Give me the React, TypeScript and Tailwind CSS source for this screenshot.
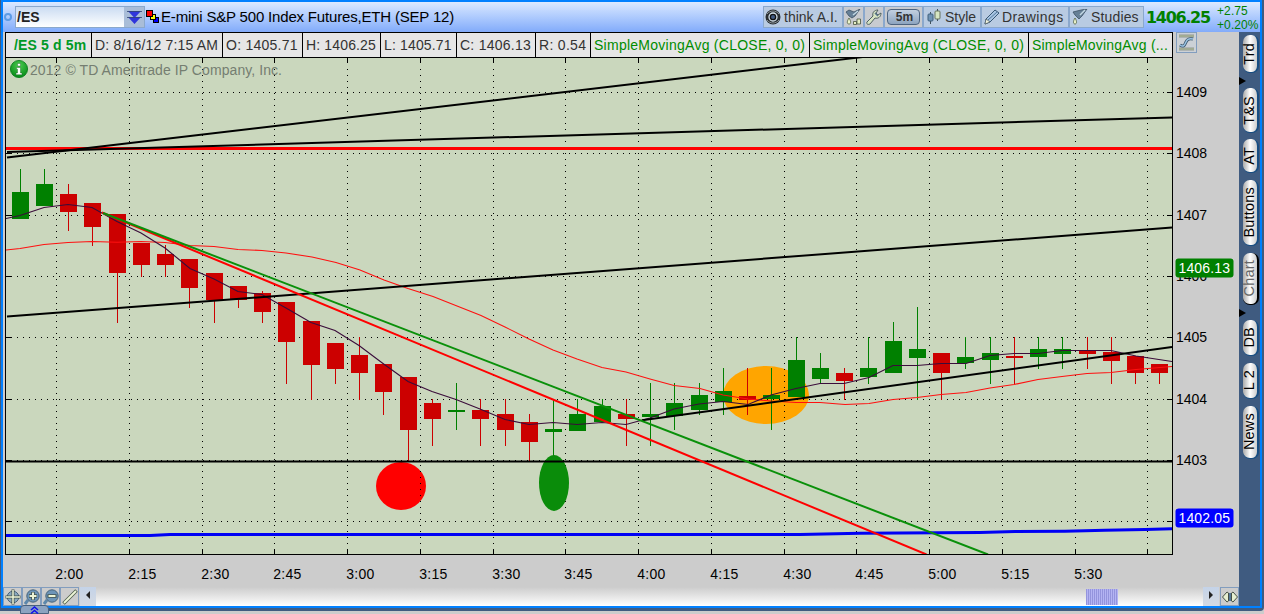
import type { ReactNode } from "react";

type Candle = [x: number, high: number, top: number, bottom: number, low: number, up: boolean];

const candles: Candle[] = [
  [12, 169, 192, 219, 219, true],
  [36, 169, 184, 206, 206, true],
  [60, 184, 194, 212, 231, false],
  [84, 203, 203, 227, 246, false],
  [109, 214, 214, 273, 323, false],
  [133, 243, 243, 265, 277, false],
  [157, 245, 254, 265, 277, false],
  [181, 259, 259, 288, 308, false],
  [206, 273, 273, 300, 323, false],
  [230, 286, 286, 300, 308, false],
  [254, 291, 293, 312, 323, false],
  [278, 302, 302, 342, 384, false],
  [303, 321, 321, 365, 400, false],
  [327, 343, 343, 369, 384, false],
  [351, 337, 355, 373, 400, false],
  [375, 364, 364, 392, 415, false],
  [400, 377, 377, 430, 461, false],
  [424, 399, 403, 419, 446, false],
  [448, 383, 410, 412, 430, true],
  [472, 399, 410, 419, 446, false],
  [497, 399, 414, 430, 446, false],
  [521, 414, 422, 442, 461, false],
  [545, 399, 429, 432, 461, true],
  [569, 399, 414, 431, 431, true],
  [594, 399, 406, 422, 422, true],
  [618, 399, 414, 419, 446, false],
  [642, 383, 414, 417, 446, true],
  [666, 383, 403, 416, 430, true],
  [691, 383, 395, 410, 415, true],
  [715, 368, 391, 402, 415, true],
  [739, 368, 396, 400, 415, false],
  [763, 368, 395, 399, 430, true],
  [788, 337, 360, 397, 397, true],
  [812, 353, 368, 379, 383, true],
  [836, 368, 373, 381, 400, false],
  [860, 337, 368, 377, 384, true],
  [885, 322, 341, 373, 373, true],
  [909, 307, 349, 358, 400, true],
  [933, 353, 353, 373, 400, false],
  [957, 337, 357, 363, 369, true],
  [982, 337, 353, 360, 384, true],
  [1006, 337, 356, 358, 384, false],
  [1030, 337, 349, 357, 369, true],
  [1054, 337, 349, 354, 369, true],
  [1079, 337, 351, 354, 369, false],
  [1103, 337, 352, 361, 384, false],
  [1127, 356, 356, 373, 384, false],
  [1151, 364, 364, 373, 384, false],
];

const slowAvg =
  "6,250 20,248.5 44,244.5 68,242.5 92,241.5 117,242.3 141,241.5 165,242.5 190,245.5 214,246.5 238,249.5 262,250.5 286,253 312,257 336,262.5 360,270 384,280 408,288.5 433,296.5 457,306 481,315.5 505,327 529,339 553,350 577,359 602,367.5 626,372 650,379 674,385.5 700,388.5 723,395 748,399 771,401 796,402.5 820,402.5 845,404.5 869,403.5 893,399.5 917,397.5 941,394.5 966,392.5 990,388 1014,384.5 1038,379.5 1062,376.5 1087,373.5 1111,372.5 1136,369.5 1172,366.5";

const fastAvg =
  "6,218.5 20,215.5 44,207.5 68,204.5 92,207.5 117,221.5 141,233 165,248 190,268.5 214,279 238,291.5 262,294.5 286,308 311,322.5 335,330.5 359,345.5 383,363.5 408,381.5 432,391.5 456,399.5 480,409 505,419.5 529,424.5 553,422.5 577,424.5 602,422.5 626,424.5 650,418 674,409 699,404 723,401.5 748,404.5 771,395 796,388.5 820,383.5 844,383.5 869,377.5 893,365.5 917,365.5 941,363.5 966,363.5 990,355.5 1014,353.5 1038,353.5 1062,350.5 1111,350.5 1136,356 1172,361.5";

const times = [
  { x: 56, label: "2:00" },
  { x: 129, label: "2:15" },
  { x: 202, label: "2:30" },
  { x: 274, label: "2:45" },
  { x: 347, label: "3:00" },
  { x: 420, label: "3:15" },
  { x: 493, label: "3:30" },
  { x: 565, label: "3:45" },
  { x: 638, label: "4:00" },
  { x: 711, label: "4:15" },
  { x: 784, label: "4:30" },
  { x: 856, label: "4:45" },
  { x: 929, label: "5:00" },
  { x: 1002, label: "5:15" },
  { x: 1075, label: "5:30" },
  { x: 1147, label: "" },
];

const prices = [
  { y: 92, label: "1409" },
  { y: 153, label: "1408" },
  { y: 215, label: "1407" },
  { y: 276, label: "1406" },
  { y: 337, label: "1405" },
  { y: 399, label: "1404" },
  { y: 460, label: "1403" },
  { y: 521, label: "" },
];

function PriceTag({ y, fill, label }: { y: number; fill: string; label: string }) {
  return (
    <g>
      <rect x="1175.5" y={y} width="58" height="19" rx="3" fill={fill} />
      <text x="1178.5" y={y + 14} fill="#fff" textLength="51.5">{label}</text>
    </g>
  );
}

function Chart() {
  return (
    <svg className="block h-[529px] w-[1234px]" viewBox="5 58 1234 529" fontFamily="'Liberation Sans', Arial, sans-serif" fontSize="14">
      <defs>
        <clipPath id="plot">
          <rect x="6" y="58" width="1166" height="496" />
        </clipPath>
        <radialGradient id="info" cx="0.5" cy="0.3" r="0.7">
          <stop offset="0" stopColor="#4ccc50" />
          <stop offset="1" stopColor="#058a18" />
        </radialGradient>
      </defs>
      <rect x="5" y="58" width="1168" height="497" fill="#cad7bd" />

      <g clipPath="url(#plot)">
        <ellipse cx="766" cy="395" rx="43" ry="29" fill="#ffa500" />
        <ellipse cx="401" cy="486" rx="25" ry="24" fill="#ff0000" />

        {/* Grid */}
        <g stroke="#000" shapeRendering="crispEdges">
          {times.map(({ x }) => (
            <g key={x}>
              <path d={`M${x + 0.5} 58v5M${x + 0.5} 549v5`} />
              <path d={`M${x + 0.5} 69V549`} strokeDasharray="1 5" />
            </g>
          ))}
          {prices.map(({ y }) => (
            <g key={y}>
              <path d={`M6 ${y + 0.5}h6M1167 ${y + 0.5}h5`} />
              <path d={`M17 ${y + 0.5}H1166`} strokeDasharray="1 5" />
            </g>
          ))}
        </g>

        {/* Candles */}
        <g shapeRendering="crispEdges">
          {candles.map(([x, high, top, bottom, low, up]) => (
            <g key={x} fill={up ? "#008000" : "#cc0000"}>
              <rect x={x + 8} y={high} width="1" height={low - high} />
              <rect x={x} y={top} width="17" height={bottom - top} />
            </g>
          ))}
        </g>

        <polyline points={slowAvg} fill="none" stroke="#ff1010" strokeWidth="1.1" />
        <polyline points={fastAvg} fill="none" stroke="#3a0c3a" strokeWidth="1.1" />
        <polyline
          points="6,535.5 150,535.5 170,534.5 800,534.5 860,533.3 980,532.5 1015,531.5 1065,531.3 1105,530.3 1145,529.5 1172,528.8"
          fill="none"
          stroke="#0000f5"
          strokeWidth="3"
        />

        {/* Drawings */}
        <ellipse cx="554" cy="483" rx="15" ry="28" fill="#0a8c0a" />
        <rect x="6" y="147" width="1166" height="3" fill="#ff0000" />
        <g stroke="#000" strokeWidth="2" fill="none">
          <path d="M7 157.5L867 56.5" />
          <path d="M7 152L1172 117.5" />
          <path d="M7 316.5L1172 227.5" />
          <path d="M642 420.3L1172 347" />
          <path d="M6 461.5H1172" />
        </g>
        <path d="M102 212.5L926.5 554.5" stroke="#ff0000" strokeWidth="2" />
        <path d="M103 213L988 554.5" stroke="#0a900a" strokeWidth="2" />
      </g>

      <path d="M5.5 58V554.5H1172.5V58" fill="none" stroke="#000" shapeRendering="crispEdges" />

      <circle cx="19" cy="69" r="8.6" fill="url(#info)" stroke="#047a18" strokeWidth="0.8" />
      <path d="M17.5 63.5h3v2.5h-3zM16.5 67.5h4v5.5h1.5v1.7h-6V73h1.5v-3.8h-1z" fill="#fff" stroke="#155a20" strokeWidth="0.4" />
      <text x="30" y="75" fill="#757e71" textLength="252">2012 © TD Ameritrade IP Company, Inc.</text>

      {times.map(({ x, label }) => (
        <text key={x} x={x - 0.7} y="579" textLength={label ? 28 : undefined}>{label}</text>
      ))}
      {prices.map(({ y, label }) => (
        <text key={y} x="1176" y={y + 5} textLength={label ? 31 : undefined}>{label}</text>
      ))}
      <PriceTag y={258.5} fill="#008000" label="1406.13" />
      <PriceTag y={508.5} fill="#0000ff" label="1402.05" />
    </svg>
  );
}

function ToolButton({ className, children }: { className: string; children: ReactNode }) {
  return (
    <button className={`flex h-[22px] shrink-0 items-center border border-[#8ba8cc] ${className}`}>{children}</button>
  );
}

function FlaskIcon() {
  return (
    <svg className="h-4 w-4 shrink-0" viewBox="0 0 16 16">
      <path d="M1 3L9 1L15 0L10 7L7 10L3 6Z" fill="#668097" stroke="#3d5264" strokeWidth="0.8" />
      <path d="M8 6L13 1" stroke="#c3d8e4" strokeWidth="1.5" />
      <path d="M3 9C1 12 1 15 3 15S5 12 3 9Z" fill="#edf5cc" stroke="#526041" strokeWidth="0.8" />
    </svg>
  );
}

function Toolbar() {
  return (
    <div className="flex">
      <ToolButton className="w-[80px] gap-[3px] bg-[#b9cbe2] pl-px">
        <svg className="h-4 w-4 shrink-0" viewBox="0 0 16 16">
          <circle cx="8" cy="8" r="7.5" fill="#292e32" />
          <path d="M2 5C5 1 11 1 14 5M2 11C5 15 11 15 14 11" fill="none" stroke="#8b9499" />
          <circle cx="8" cy="8" r="4" fill="#111" stroke="#d7e4ed" strokeWidth="1.3" />
          <circle cx="8" cy="8" r="2" fill="#405a82" />
        </svg>
        <span className="whitespace-nowrap">think A.I.</span>
      </ToolButton>
      <ToolButton className="w-[21px] justify-center bg-[#c8cbd0]">
        <svg className="h-[17px] w-[17px] shrink-0" viewBox="0 0 17 17">
          <path d="M1 3L4 1L9 3L15 0L10 7L7 9L4 7Z" fill="#668097" stroke="#3d5264" strokeWidth="0.8" />
          <path d="M8 6L13 2" stroke="#c3d8e4" strokeWidth="1.5" />
          <path d="M4 9C2 12 1.5 15 4 15S6 12 4 9Z" fill="#edf5cc" stroke="#526041" strokeWidth="0.8" />
          <path d="M8.5 12.500h3v3h-3zM12 10h3.500v5H12z" fill="#e5eec5" stroke="#47533d" strokeWidth="0.8" />
        </svg>
      </ToolButton>
      <ToolButton className="w-[20px] justify-center bg-[#c8cbd0]">
        <svg className="h-4 w-4 shrink-0" viewBox="0 0 16 16">
          <path d="M1 13L7 7C6 4 8 1 12 1L10 4L12 6L15 4C15 8 12 10 9 9L4 15C2 16 0 15 1 13Z" fill="#d7e4c4" stroke="#4f6060" />
          <path d="M9 4L12 7" stroke="#58768b" strokeWidth="1.5" />
        </svg>
      </ToolButton>
      <ToolButton className="w-[39px] justify-center bg-[#c8cbd0]">
        <span className="flex h-4 w-[33px] items-center justify-center rounded border border-[#4d6480] bg-linear-to-b from-[#c2d0e0] to-[#8da4bf] pl-[2px] text-xs font-bold">5m</span>
      </ToolButton>
      <ToolButton className="w-[58px] gap-1 bg-[#b9cbe2] pl-[3px]">
        <svg className="h-4 w-[14px] shrink-0" viewBox="0 0 14 16">
          <path d="M3.5 3v12M10.5 0v12" stroke="#41515b" />
          <rect x="1" y="5" width="5" height="7" rx="1" fill="#6f93b5" stroke="#41617c" />
          <rect x="8" y="2" width="5" height="8" rx="1" fill="#d7e6c2" stroke="#66735d" />
        </svg>
        <span>Style</span>
      </ToolButton>
      <ToolButton className="w-[88px] gap-[2px] bg-[#b9cbe2] pl-[2px]">
        <svg className="h-4 w-4 shrink-0" viewBox="0 0 16 16">
          <path d="M1 15L2 10L11 1L15 4L6 13Z" fill="#a9c5e2" stroke="#365675" />
          <path d="M4 11L13 3" stroke="#5378a0" />
          <path d="M1 15L2 10L6 13Z" fill="#f3f5df" stroke="#4c5960" strokeWidth="0.7" />
        </svg>
        <span className="tracking-[0.4px]">Drawings</span>
      </ToolButton>
      <ToolButton className="w-[75px] gap-[3px] bg-[#b9cbe2] pl-[2px]">
        <FlaskIcon />
        <span className="tracking-[0.15px]">Studies</span>
      </ToolButton>
    </div>
  );
}

function Header() {
  return (
    <header className="flex h-[30px] items-center bg-linear-to-b from-[#dbe9ff] to-[#82abfa]">
      <div className="ml-px h-2 w-2 shrink-0 rounded-full border-2 border-[#5c9be5]" />
      <div className="ml-[3px] flex h-[22px] w-[130px] shrink-0 items-center border border-[#8ba8cc] bg-linear-to-b from-[#cbdcf2] to-white">
        <span className="flex-1 pl-px text-[14px] font-bold text-[#222]">/ES</span>
        <div className="flex h-full w-[20px] items-center justify-center bg-[#a9bdd8]">
          <svg className="h-[15px] w-[15px]" viewBox="0 0 15 15">
            <path d="M1 1H14L7.5 8ZM1 7H14L7.5 14Z" fill="#2f35db" />
            <path d="M0 1.500H15M0 7.500H15" stroke="#31456e" strokeWidth="0.8" />
          </svg>
        </div>
      </div>
      <svg className="ml-px h-[14px] w-[14px] shrink-0" viewBox="0 0 14 14" shapeRendering="crispEdges">
        <path d="M7.500 7.500h5v5h-5z" fill="#0000ff" stroke="#000" />
        <path d="M4.500 4.500h5v5h-5z" fill="#ffff00" stroke="#000" />
        <path d="M0.500 0.500h6v6h-6z" fill="#ff0000" stroke="#000" />
      </svg>
      <span className="ml-px w-[602px] shrink-0 whitespace-nowrap text-[15px] tracking-[-0.18px] text-black">E-mini S&amp;P 500 Index Futures,ETH (SEP 12)</span>
      <Toolbar />
      <span className="ml-[2px] w-[71px] shrink-0 whitespace-nowrap pt-px font-['DejaVu_Sans',sans-serif] text-[16px] font-bold tracking-[-1.3px] text-[#008000]">1406.25</span>
      <div className="pt-[2px] whitespace-nowrap text-[12px] leading-[14px] tracking-[0.1px] text-[#008000]">
        <div>+2.75</div>
        <div>+0.20%</div>
      </div>
    </header>
  );
}

const cells = [
  { text: "D: 8/16/12 7:15 AM", width: "w-[131px]", color: "text-[#333] tracking-[0.18px]" },
  { text: "O: 1405.71", width: "w-[80px]", color: "text-[#333] tracking-[0.25px]" },
  { text: "H: 1406.25", width: "w-[78px]", color: "text-[#333] tracking-[0.15px]" },
  { text: "L: 1405.71", width: "w-[76px]", color: "text-[#333] tracking-[0.15px]" },
  { text: "C: 1406.13", width: "w-[79px]", color: "text-[#333] tracking-[0.25px]" },
  { text: "R: 0.54", width: "w-[55px]", color: "text-[#333] tracking-[0.3px]" },
  { text: "SimpleMovingAvg (CLOSE, 0, 0)", width: "w-[219px]", color: "text-[#008c00] tracking-[0.26px]" },
  { text: "SimpleMovingAvg (CLOSE, 0, 0)", width: "w-[219px]", color: "text-[#008c00] tracking-[0.26px]" },
  { text: "SimpleMovingAvg (...", width: "w-[144px]", color: "text-[#008c00] tracking-[0.2px]" },
];

function InfoBar() {
  return (
    <div className="flex h-[26px] w-[1168px] border-y border-l border-black bg-[#e6e6e6] leading-6">
      <div className="w-[86px] border-r border-black pl-[8px] text-[14px] font-bold tracking-[0.15px] whitespace-nowrap text-[#009926]">/ES 5 d 5m</div>
      {cells.map((cell, i) => (
        <div key={i} className={`shrink-0 overflow-hidden border-r border-black pl-[3px] whitespace-nowrap ${cell.width} ${cell.color}`}>
          {cell.text}
        </div>
      ))}
    </div>
  );
}

function SideTab({ label, className }: { label: string; className: string }) {
  return (
    <button className={`flex w-4 shrink-0 items-center justify-center rounded-[7px] border-r-2 border-b border-[#174d82] bg-linear-to-r from-[#aaa] via-white to-[#ccc] ${className}`}>
      <span className="rotate-180 text-[14.5px] tracking-[0.2px] whitespace-nowrap [writing-mode:vertical-rl]">{label}</span>
    </button>
  );
}

function Triangle({ className }: { className: string }) {
  return (
    <svg className={`block h-2 w-[7px] shrink-0 self-start ${className}`} viewBox="0 0 7 8">
      <path d="M0 0L7 4L0 8Z" />
    </svg>
  );
}

function Sidebar() {
  return (
    <aside className="flex w-[21px] flex-col items-center bg-[#3f5b80] pt-[3px] pl-[2px] text-black">
      <SideTab label="Trd" className="h-[38px]" />
      <Triangle className="mt-[4px] -ml-[2px]" />
      <SideTab label="T&S" className="mt-[3px] h-[45px]" />
      <SideTab label="AT" className="mt-[6px] h-[34px]" />
      <SideTab label="Buttons" className="mt-[7px] h-[66px]" />
      <SideTab label="Chart" className="mt-[7px] h-[52px] border-black text-[#666]" />
      <Triangle className="mt-[4px] -ml-[2px]" />
      <SideTab label="DB" className="mt-[3px] h-[36px]" />
      <SideTab label="L 2" className="mt-[7px] h-[36px]" />
      <SideTab label="News" className="mt-[7px] h-[53px]" />
    </aside>
  );
}

function SmallButton({ children }: { children: ReactNode }) {
  return (
    <button className="flex h-[19px] w-[19px] shrink-0 items-center justify-center border border-[#829dbe] bg-[#ccc]">
      <svg className="h-4 w-4 shrink-0" viewBox="0 0 16 16">{children}</svg>
    </button>
  );
}

function BottomBar() {
  return (
    <div className="flex h-[19px]">
      <SmallButton>
        <circle cx="8" cy="8" r="5.8" fill="#8ba8bf" stroke="#49657b" />
        <path d="M8 0.500v15M0.500 8h15" stroke="#44534b" strokeWidth="3" />
        <path d="M8 1v14M1 8h14" stroke="#edf5d7" strokeWidth="1.5" />
      </SmallButton>
      <SmallButton>
        <path d="M4 11L1 15" stroke="#5d87ab" strokeWidth="3" />
        <circle cx="9" cy="7" r="6.2" fill="#6c94b8" stroke="#49657b" />
        <path d="M9 3v8M5 7h8" stroke="#40514c" strokeWidth="3.5" />
        <path d="M9 3.500v7M5.500 7h7" stroke="#edf5d7" strokeWidth="2" />
      </SmallButton>
      <SmallButton>
        <path d="M4 11L1 15" stroke="#5d87ab" strokeWidth="3" />
        <circle cx="9" cy="7" r="6.2" fill="#6c94b8" stroke="#49657b" />
        <path d="M4.500 7h9" stroke="#40514c" strokeWidth="3.5" />
        <path d="M5.500 7h7" stroke="#edf5d7" strokeWidth="2" />
      </SmallButton>
      <SmallButton>
        <path d="M1.500 14.500L14.500 1.500" stroke="#4d5d4b" strokeWidth="3.5" />
        <path d="M2 14L14 2" stroke="#edf5d7" strokeWidth="2" />
      </SmallButton>
      <div className="ml-px flex w-4 items-center justify-center bg-linear-to-b from-[#c4d3e8] to-[#d5dae2] pb-1">
        <svg className="h-2 w-1" viewBox="0 0 4 8"><path d="M4 0L0 4L4 8Z" fill="#222" /></svg>
      </div>
      <div className="flex flex-1 bg-linear-to-b from-[#ccc] to-white">
        <div className="ml-[990px] h-[16px] w-[32px] self-center bg-[repeating-linear-gradient(90deg,#9494dd_0px,#9494dd_1px,#b4b4f3_1px,#b4b4f3_2px)]" />
      </div>
      <div className="flex w-4 items-center justify-center bg-linear-to-b from-[#c4d3e8] to-[#d5dae2] pb-1">
        <svg className="h-2 w-1" viewBox="0 0 4 8"><path d="M0 0L4 4L0 8Z" fill="#222" /></svg>
      </div>
      <div className="ml-px">
        <SmallButton>
          <path d="M0.500 8L5 3L6.500 4v8L5 13ZM15.500 8L11 3L9.500 4v8L11 13Z" fill="#e7efd1" stroke="#465046" />
          <path d="M8 4v8" stroke="#55799a" strokeWidth="2" />
        </SmallButton>
      </div>
    </div>
  );
}

export default function App() {
  return (
    <div className="relative h-[614px] w-[1264px] overflow-hidden bg-[#ccc] font-['Liberation_Sans',Arial,sans-serif] text-[14px] text-[#333]">
      <div className="h-[611px] rounded-br-sm bg-[#3f5b80] pr-[2px] pb-[3px] pl-px">
        <div className="h-[608px] border-2 border-[#0080ff] bg-[#ccc]">
          <Header />
          <div className="flex h-[574px]">
            <div className="w-[1236px] shrink-0">
              <div className="flex pl-[2px]">
                <InfoBar />
                <button className="ml-[3px] flex h-[21px] w-[21px] items-center justify-center border border-[#829dbe] bg-[#ccd1d6]">
                  <svg className="h-[17px] w-[17px] shrink-0" viewBox="0 0 17 17">
                    <path d="M1 2h15M1 15h15" stroke="#54604e" strokeWidth="2.5" />
                    <path d="M1 2h15M1 15h15" stroke="#edf5d7" strokeWidth="1.2" />
                    <path d="M2 11C6 14 7 10 8 8S10 4 15 5" fill="none" stroke="#3f5b70" strokeWidth="3" />
                    <path d="M2 11C6 14 7 10 8 8S10 4 15 5" fill="none" stroke="#9cc5e5" strokeWidth="1.4" />
                  </svg>
                </button>
              </div>
              <div className="pl-[2px]">
                <Chart />
              </div>
              <BottomBar />
            </div>
            <Sidebar />
          </div>
        </div>
      </div>
      <div className="absolute top-[605px] left-[20px] flex h-[9px] w-[29px] items-center justify-center rounded-t border border-[#49617f] bg-[#8ca3c0]">
        <svg className="h-[8px] w-[9px]" viewBox="0 0 9 8">
          <path d="M1 4L4.5 1L8 4M1 7.500L4.5 4.500L8 7.500" fill="none" stroke="#1010ee" strokeWidth="1.5" />
        </svg>
      </div>
    </div>
  );
}
